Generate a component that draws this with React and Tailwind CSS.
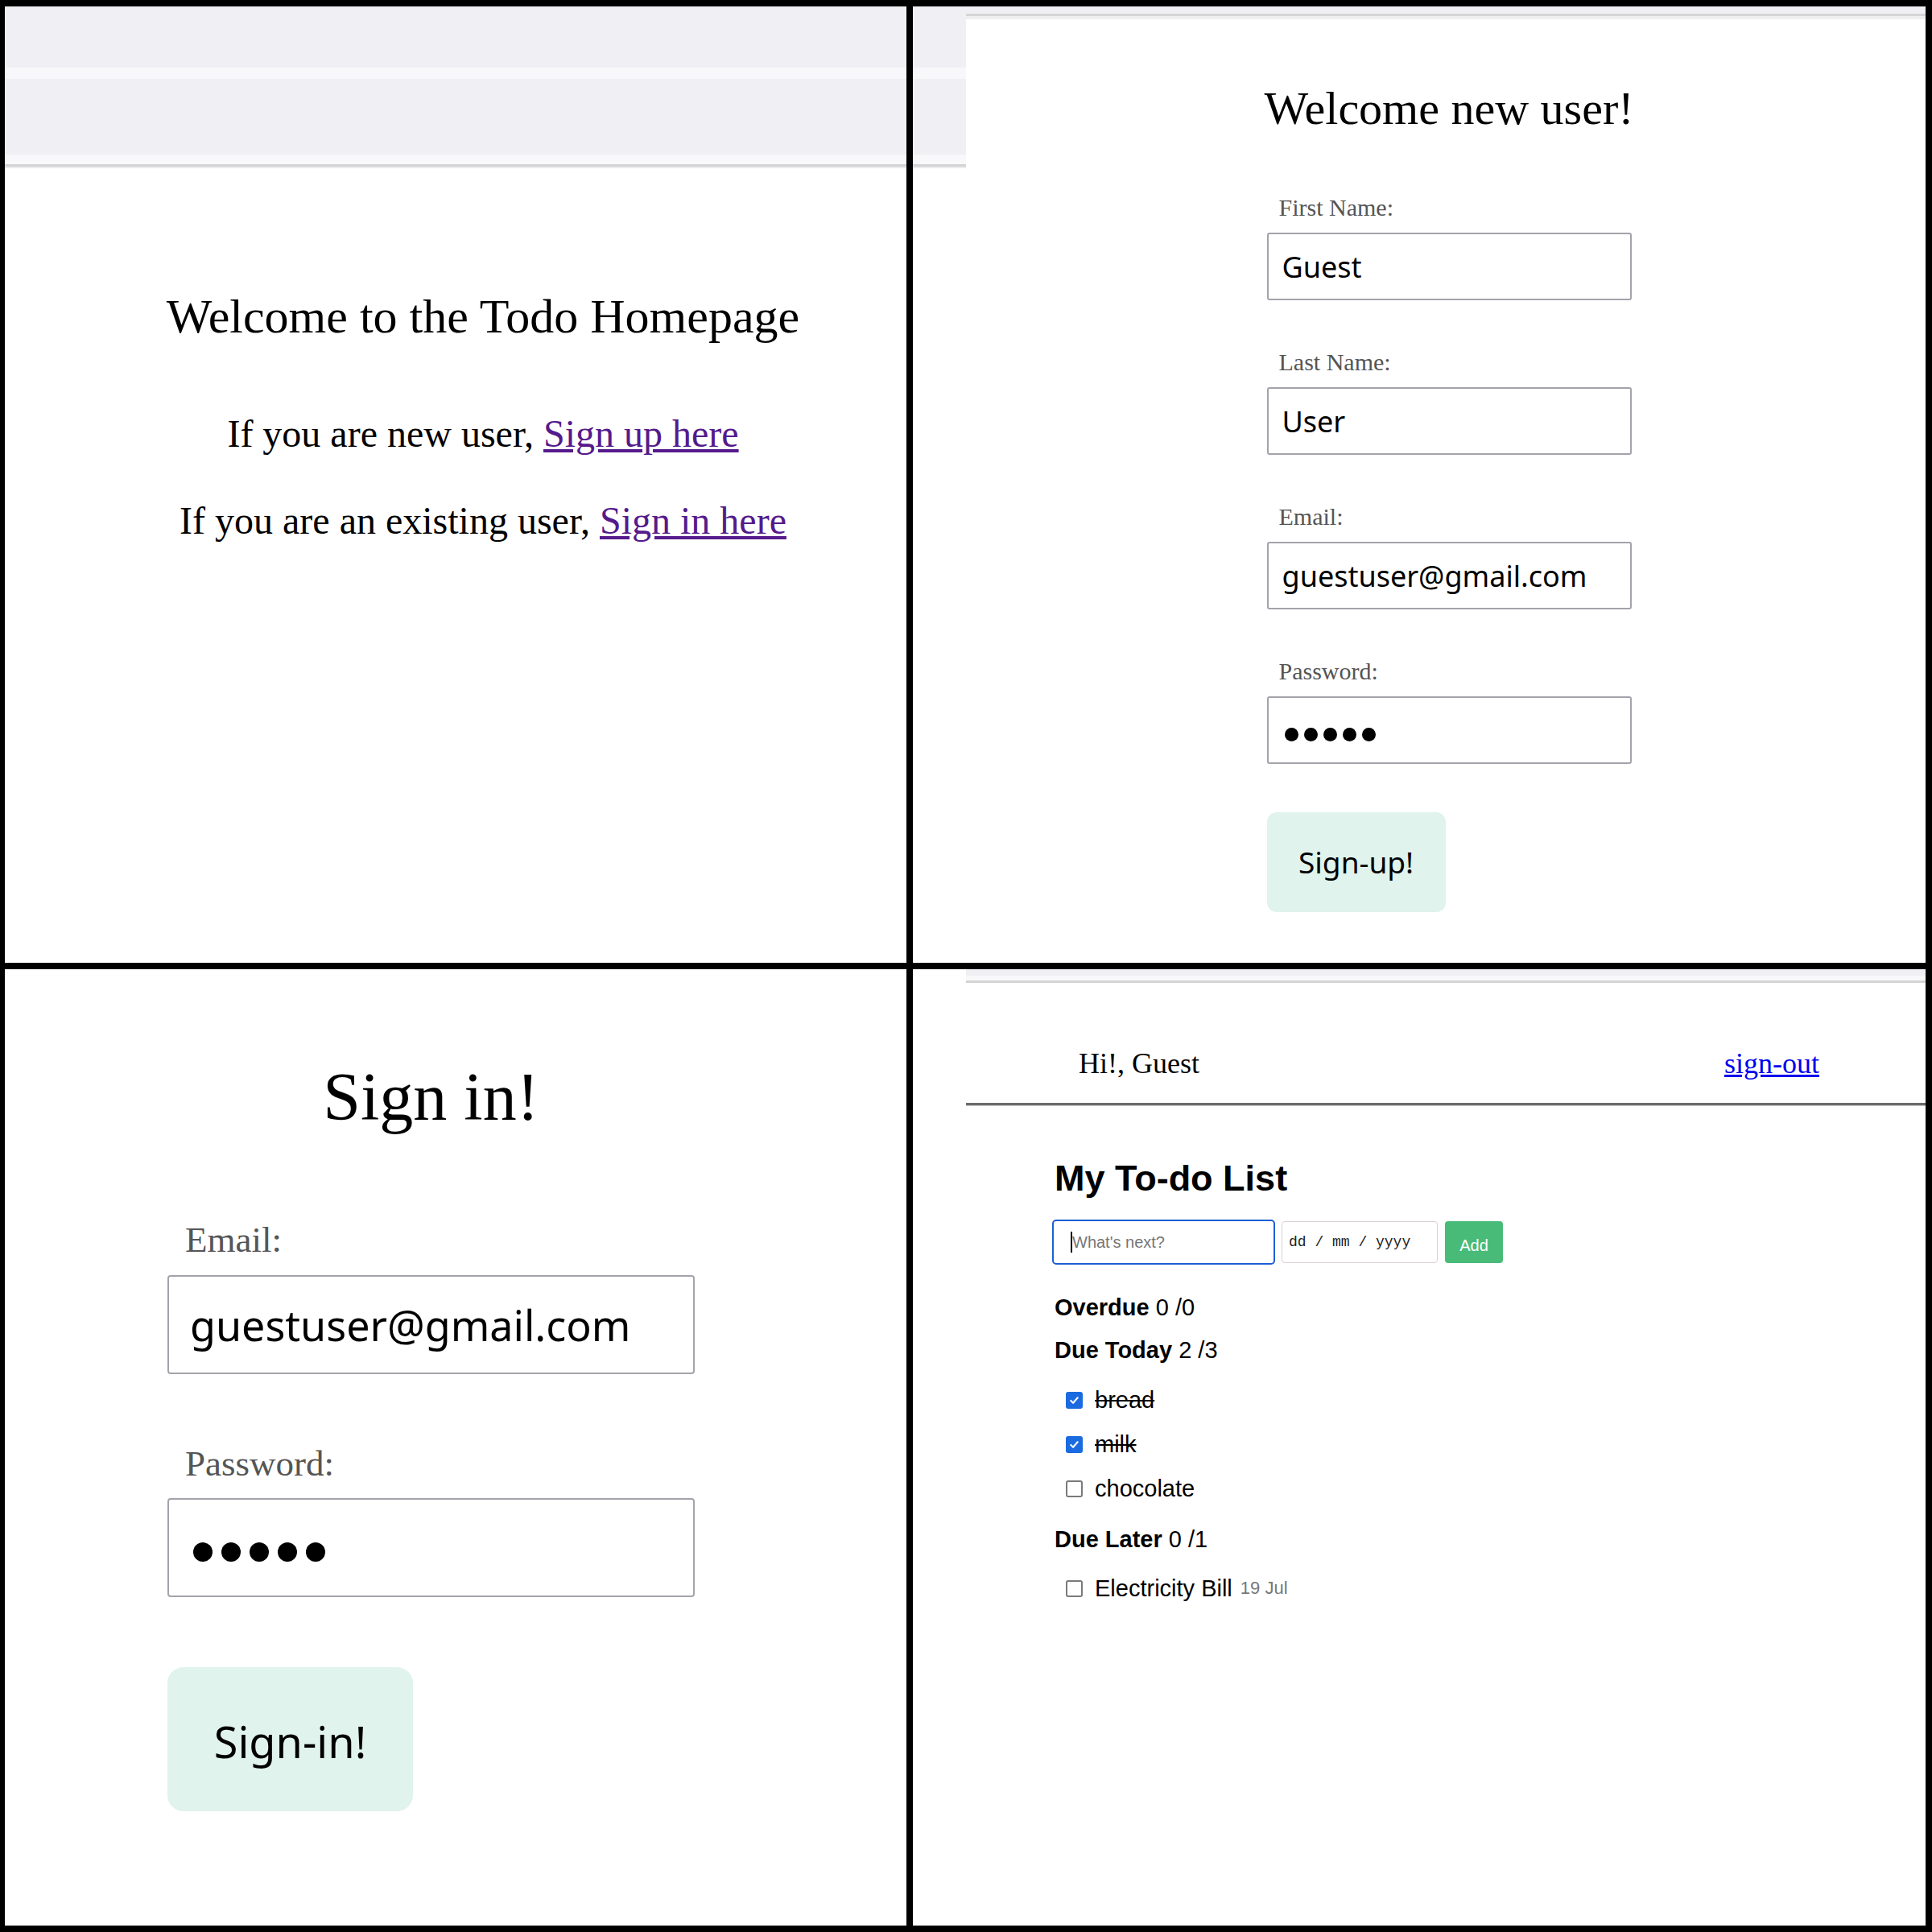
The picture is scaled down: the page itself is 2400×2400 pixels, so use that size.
import React from 'react';

const serif = "font-['Liberation_Serif','Times_New_Roman',serif]";
const arial = "font-['Liberation_Sans',Arial,sans-serif]";
const noto = "font-['Noto_Sans','Liberation_Sans',sans-serif]";
const mono = "font-['Liberation_Mono','Courier_New',monospace]";

// grey browser toolbar band seen at the top of the home page capture
const BrowserChrome = () => (
  <div>
    <div className="h-[76px] bg-[#f0f0f4]" />
    <div className="h-[14px] bg-[#f8f8fa]" />
    <div className="h-[94px] bg-[#f0f0f4]" />
    <div className="h-[12px] bg-[#f8f8fa]" />
    <div className="h-[3px] bg-[#d3d3d5]" />
    <div className="h-[2px] bg-[#ebebeb]" />
  </div>
);

const HomePanel = () => (
  <section className="overflow-hidden bg-white">
    <div className="w-[1194px]">
      <BrowserChrome />
    </div>
    <div className={`w-[1188px] pt-[149px] text-center text-black ${serif}`}>
      <h1 className="text-[60px] font-normal leading-[70px]">Welcome to the Todo Homepage</h1>
      <p className="mt-[83px] text-[48px] leading-[56px]">
        If you are new user, <a href="#signup" className="text-[#551a8b] underline">Sign up here</a>
      </p>
      <p className="mt-[52px] text-[48px] leading-[56px]">
        If you are an existing user, <a href="#signin" className="text-[#551a8b] underline">Sign in here</a>
      </p>
    </div>
  </section>
);

const Dots = ({ size, gap }) => (
  <>
    {[0, 1, 2, 3, 4].map((i) => (
      <span key={i} className={`${size} rounded-full bg-black`} style={{ marginRight: i < 4 ? gap : 0 }} />
    ))}
  </>
);

const SignupField = ({ label, value, first }) => (
  <div className={first ? '' : 'mt-[60px]'}>
    <label className={`block pl-[15px] text-[30px] leading-[34px] text-[#555] ${serif}`}>{label}</label>
    <input
      readOnly
      defaultValue={value}
      className={`mt-[14px] block h-[84px] w-full rounded-[3px] border-2 border-[#a3a3ab] px-[17px] text-[36px] text-black outline-none ${noto}`}
    />
  </div>
);

const SignupPanel = () => (
  <section className="flex overflow-hidden bg-white">
    <div className="w-[66px] shrink-0">
      <BrowserChrome />
    </div>
    <div className="w-[1200px] shrink-0">
      <div className="h-[9px] bg-[#f0f0f4]" />
      <div className="h-[3px] bg-[#d6d6d6]" />
      <div className="h-[4px] bg-[#efefef]" />
      <h2 className={`mt-[77px] text-center text-[58px] font-normal leading-[68px] text-black ${serif}`}>Welcome new user!</h2>
      <form className="mx-auto mt-[72px] w-[453px]">
        <SignupField first label="First Name:" value="Guest" />
        <SignupField label="Last Name:" value="User" />
        <SignupField label="Email:" value="guestuser@gmail.com" />
        <div className="mt-[60px]">
          <label className={`block pl-[15px] text-[30px] leading-[34px] text-[#555] ${serif}`}>Password:</label>
          <div className="mt-[14px] flex h-[84px] w-full items-center rounded-[3px] border-2 border-[#a3a3ab] pl-[20px] pt-[10px]">
            <Dots size="h-[17px] w-[17px]" gap={7} />
          </div>
        </div>
        <button type="button" className={`mt-[60px] h-[124px] w-[222px] rounded-[12px] bg-[#e0f3ec] text-[37px] text-black ${noto}`}>
          Sign-up!
        </button>
      </form>
    </div>
  </section>
);

const SigninPanel = () => (
  <section className="overflow-hidden bg-white">
    <div className="ml-[202px] w-[655px] pt-[111px]">
      <h2 className={`text-center text-[84px] font-normal leading-[96px] text-black ${serif}`}>Sign in!</h2>
      <label className={`mt-[103px] block pl-[22px] text-[45px] leading-[52px] text-[#555] ${serif}`}>Email:</label>
      <input
        readOnly
        defaultValue="guestuser@gmail.com"
        className={`mt-[18px] block h-[123px] w-full rounded-[4px] border-2 border-[#a3a3ab] px-[26px] text-[52px] text-black outline-none ${noto}`}
      />
      <label className={`mt-[85px] block pl-[22px] text-[45px] leading-[52px] text-[#555] ${serif}`}>Password:</label>
      <div className="mt-[17px] flex h-[123px] w-full items-center rounded-[4px] border-2 border-[#a3a3ab] pl-[30px] pt-[10px]">
        <Dots size="h-[24px] w-[24px]" gap={11} />
      </div>
      <button type="button" className={`mt-[87px] h-[179px] w-[305px] rounded-[20px] bg-[#e0f3ec] pt-[6px] text-[54px] text-black ${noto}`}>
        Sign-in!
      </button>
    </div>
  </section>
);

const Checkbox = ({ checked }) =>
  checked ? (
    <span className="flex h-[21px] w-[21px] shrink-0 items-center justify-center rounded-[3px] bg-[#1a6be0]">
      <svg viewBox="0 0 16 16" className="h-[15px] w-[15px]">
        <path d="M3.5 8.5l3 3 6-7" fill="none" stroke="white" strokeWidth="2.2" strokeLinecap="round" strokeLinejoin="round" />
      </svg>
    </span>
  ) : (
    <span className="h-[21px] w-[21px] shrink-0 rounded-[3px] border-2 border-[#7a7a7a] bg-white" />
  );

const Todo = ({ text, done, date, className }) => (
  <div className={`flex h-[36px] items-center gap-[15px] pl-[14px] text-[29px] leading-[36px] ${className}`}>
    <Checkbox checked={done} />
    <span className={done ? 'line-through' : ''}>{text}</span>
    {date && <span className="-ml-[5px] text-[22px] text-[#777]">{date}</span>}
  </div>
);

const Group = ({ title, count, className }) => (
  <div className={`h-[36px] text-[29px] leading-[36px] ${className}`}>
    <span className="font-bold">{title}</span> {count}
  </div>
);

const TodoPanel = () => (
  <section className="flex overflow-hidden bg-white">
    <div className="w-[66px] shrink-0" />
    <div className={`w-[1200px] shrink-0 text-black ${arial}`}>
      <div className="h-[8px] bg-[#f0f0f4]" />
      <div className="h-[6px] bg-[#f8f8fa]" />
      <div className="h-[3px] bg-[#d4d4d4]" />
      <header className={`flex h-[149px] items-start justify-between px-[140px] pt-[79px] text-[36px] leading-[42px] ${serif}`}>
        <span>Hi!, Guest</span>
        <a href="#signout" className="text-[#0000ee] underline">sign-out</a>
      </header>
      <div className="h-[3px] bg-[#6b6b6b]" />
      <div className="h-[1px] bg-[#c4c4c4]" />
      <main className="px-[110px]">
        <h1 className="mt-[64px] text-[45px] font-bold leading-[52px]">My To-do List</h1>
        <div className="-ml-[3px] mt-[25px] flex h-[56px] items-center">
          <div className="flex h-[56px] w-[277px] items-center rounded-[5px] border-2 border-[#1c5fd4] pl-[21px]">
            <span className="h-[26px] w-[2px] bg-black" />
            <span className="text-[20px] text-[#767676]">What's next?</span>
          </div>
          <div className={`ml-[8px] flex h-[52px] w-[194px] items-center rounded-[4px] border border-[#d8d0d5] pl-[8px] text-[18px] text-[#222] ${mono}`}>
            dd / mm / yyyy
          </div>
          <button type="button" className="ml-[9px] h-[52px] w-[72px] rounded-[4px] bg-[#48bb78] pt-[8px] text-[20px] text-white">
            Add
          </button>
        </div>
        <Group className="mt-[35px]" title="Overdue" count="0 /0" />
        <Group className="mt-[17px]" title="Due Today" count="2 /3" />
        <Todo className="mt-[26px]" text="bread" done />
        <Todo className="mt-[19px]" text="milk" done />
        <Todo className="mt-[19px]" text="chocolate" />
        <Group className="mt-[27px]" title="Due Later" count="0 /1" />
        <Todo className="mt-[25px]" text="Electricity Bill" date="19 Jul" />
      </main>
    </div>
  </section>
);

export default function App() {
  return (
    <div className="grid h-[2400px] w-[2400px] grid-cols-[1120px_1258px] grid-rows-[1188px_1188px] gap-[8px] bg-black pl-[6px] pt-[8px]">
      <HomePanel />
      <SignupPanel />
      <SigninPanel />
      <TodoPanel />
    </div>
  );
}
